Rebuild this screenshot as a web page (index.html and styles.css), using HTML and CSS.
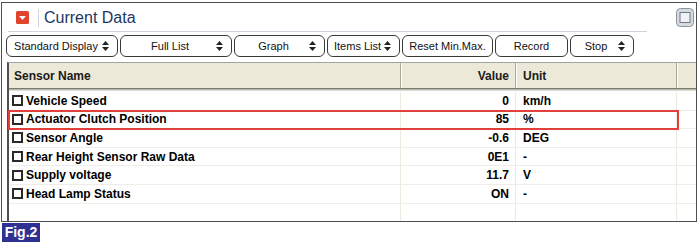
FILE: index.html
```html
<!DOCTYPE html>
<html lang="en">
<head>
  <meta charset="UTF-8">
  <title>Current Data</title>
  <link rel="stylesheet" href="styles.css">
</head>
<body>
  <div class="panel">
    <div class="head">
      <div class="title">
        <span class="collapse">
          <svg width="13" height="13" viewBox="0 0 13 13"><rect width="13" height="13" rx="1.5" fill="#e0442c"/><path d="M3 5h7L6.5 9z" fill="#fff"/></svg>
        </span>
        <span class="title-text">Current Data</span>
      </div>
      <span class="max">
        <svg width="18" height="19" viewBox="0 0 18 19"><rect x="0.5" y="0.5" width="17" height="18" rx="4" fill="#d6dbe2" stroke="#8b929c"/><rect x="4" y="4.5" width="10" height="10" fill="#eef1f5" stroke="#6f7782"/></svg>
      </span>
    </div>

    <div class="toolbar">
      <button class="tb w112"><span class="label">Standard Display</span><svg class="arrow" width="7" height="10" viewBox="0 0 7 10"><path d="M3.5 0 7 4H0zM0 6h7l-3.5 4z"/></svg></button>
      <button class="tb w112"><span class="label">Full List</span><svg class="arrow" width="7" height="10" viewBox="0 0 7 10"><path d="M3.5 0 7 4H0zM0 6h7l-3.5 4z"/></svg></button>
      <button class="tb w91"><span class="label">Graph</span><svg class="arrow" width="7" height="10" viewBox="0 0 7 10"><path d="M3.5 0 7 4H0zM0 6h7l-3.5 4z"/></svg></button>
      <button class="tb w73"><span class="label">Items List</span><svg class="arrow" width="7" height="10" viewBox="0 0 7 10"><path d="M3.5 0 7 4H0zM0 6h7l-3.5 4z"/></svg></button>
      <button class="tb w91 plain"><span class="label">Reset Min.Max.</span></button>
      <button class="tb w73 plain"><span class="label">Record</span></button>
      <button class="tb w64"><span class="label">Stop</span><svg class="arrow" width="7" height="10" viewBox="0 0 7 10"><path d="M3.5 0 7 4H0zM0 6h7l-3.5 4z"/></svg></button>
    </div>

    <div class="grid">
      <div class="row header">
        <div class="cell name">Sensor Name</div>
        <div class="cell value">Value</div>
        <div class="cell unit">Unit</div>
        <div class="cell"></div>
      </div>
      <div class="body">
        <div class="row">
          <div class="cell name"><span class="check"></span>Vehicle Speed</div>
          <div class="cell value">0</div>
          <div class="cell unit">km/h</div>
          <div class="cell"></div>
        </div>
        <div class="row marked">
          <div class="cell name"><span class="check"></span>Actuator Clutch Position</div>
          <div class="cell value">85</div>
          <div class="cell unit">%</div>
          <div class="cell"></div>
        </div>
        <div class="row">
          <div class="cell name"><span class="check"></span>Sensor Angle</div>
          <div class="cell value">-0.6</div>
          <div class="cell unit">DEG</div>
          <div class="cell"></div>
        </div>
        <div class="row">
          <div class="cell name"><span class="check"></span>Rear Height Sensor Raw Data</div>
          <div class="cell value">0E1</div>
          <div class="cell unit">-</div>
          <div class="cell"></div>
        </div>
        <div class="row">
          <div class="cell name"><span class="check"></span>Supply voltage</div>
          <div class="cell value">11.7</div>
          <div class="cell unit">V</div>
          <div class="cell"></div>
        </div>
        <div class="row">
          <div class="cell name"><span class="check"></span>Head Lamp Status</div>
          <div class="cell value">ON</div>
          <div class="cell unit">-</div>
          <div class="cell"></div>
        </div>
        <div class="row filler">
          <div class="cell"></div><div class="cell"></div><div class="cell"></div><div class="cell"></div>
        </div>
      </div>
    </div>
  </div>

  <div class="fig">Fig.2</div>
</body>
</html>
```

FILE: styles.css
```css
body { margin: 0; background: #fff; font-family: "Liberation Sans", Arial, sans-serif; color: #000; }

.panel { margin: 2px 0 0 1px; width: 696px; height: 220px; box-sizing: border-box;
  border: 1px solid #4e4e4e; display: flex; flex-direction: column; }

/* title bar */
.head { display: flex; height: 29px; }
.title { flex: 1; display: flex; align-items: center; margin-left: 6px; height: 28px;
  border-bottom: 1px solid #cdd4de; }
.collapse { display: flex; margin: 1px 0 0 8px; padding-right: 9px; height: 18px;
  align-items: center; border-right: 1px solid #cdd4de; }
.title-text { margin-left: 5px; font-size: 16px; color: #1c375f; padding-top: 2px; }
.max { display: flex; margin: 5px 2px 0 29px; }

/* toolbar */
.toolbar { display: flex; gap: 2px; margin: 3px 0 0 4px; }
.tb { display: flex; align-items: center; height: 22px; padding: 0 8px 0 6px;
  border: 1px solid #3a3a3a; border-radius: 6px; background: #fff;
  font-family: "Liberation Sans", Arial, sans-serif; font-size: 11px; color: #111; }
.tb .label { flex: 1; text-align: center; white-space: nowrap; }
.tb .arrow { margin-left: 3px; fill: #222; flex: none; }
.tb.plain { padding: 0 4px; }
.w112 { width: 112px; }
.w91 { width: 91px; }
.w73 { width: 73px; }
.w64 { width: 64px; }

/* data grid */
.grid { flex: 1; margin: 5px 0 0 5px; display: flex; flex-direction: column;
  border-left: 2px solid #4f4f4f; border-top: 1px solid #a3a3a3; }
.row { display: grid; grid-template-columns: 392px 115px 161px 1fr; }
.header { height: 25px; background: #ece9d8; border-bottom: 1px solid #7d7b70;
  box-shadow: 0 1px #b9b7ad, 0 2px #dddcd4; font-weight: bold; font-size: 12px; color: #1a1a1a; }
.header .cell { border-right: 1px solid #aca899; }
.header .cell + .cell { box-shadow: inset 1px 0 #fff; }
.header .cell:last-child { border-right: none; }

.body { flex: 1; display: flex; flex-direction: column; padding-top: 3px; }
.body .row { height: 18.6px; box-sizing: border-box; border-bottom: 1px solid #efeee6;
  font-size: 12px; font-weight: bold; }
.body .cell { border-right: 1px solid #ecebe0; }
.body .cell:last-child { border-right: none; }
.body .filler { flex: 1; border-bottom: none; }

.cell { display: flex; align-items: center; white-space: nowrap; overflow: hidden; }
.cell.name { padding-left: 5px; }
.body .cell.name { padding-left: 3px; }
.cell.value { justify-content: flex-end; padding-right: 6px; }
.cell.unit { padding-left: 7px; }

.check { width: 11px; height: 11px; box-sizing: border-box; border: 2px solid #2a2a2a;
  margin-right: 3px; flex: none; }

.marked { position: relative; }
.marked::after { content: ""; position: absolute; left: -1px; right: 17px; top: -1px; bottom: -2px;
  border: 2px solid #e2413b; pointer-events: none; }

.fig { display: inline-block; margin: 1px 0 0 2px; width: 38px; height: 19px; line-height: 19px;
  background: #2f3192; color: #fff; font-weight: bold; font-size: 14px; text-align: center; }
```
